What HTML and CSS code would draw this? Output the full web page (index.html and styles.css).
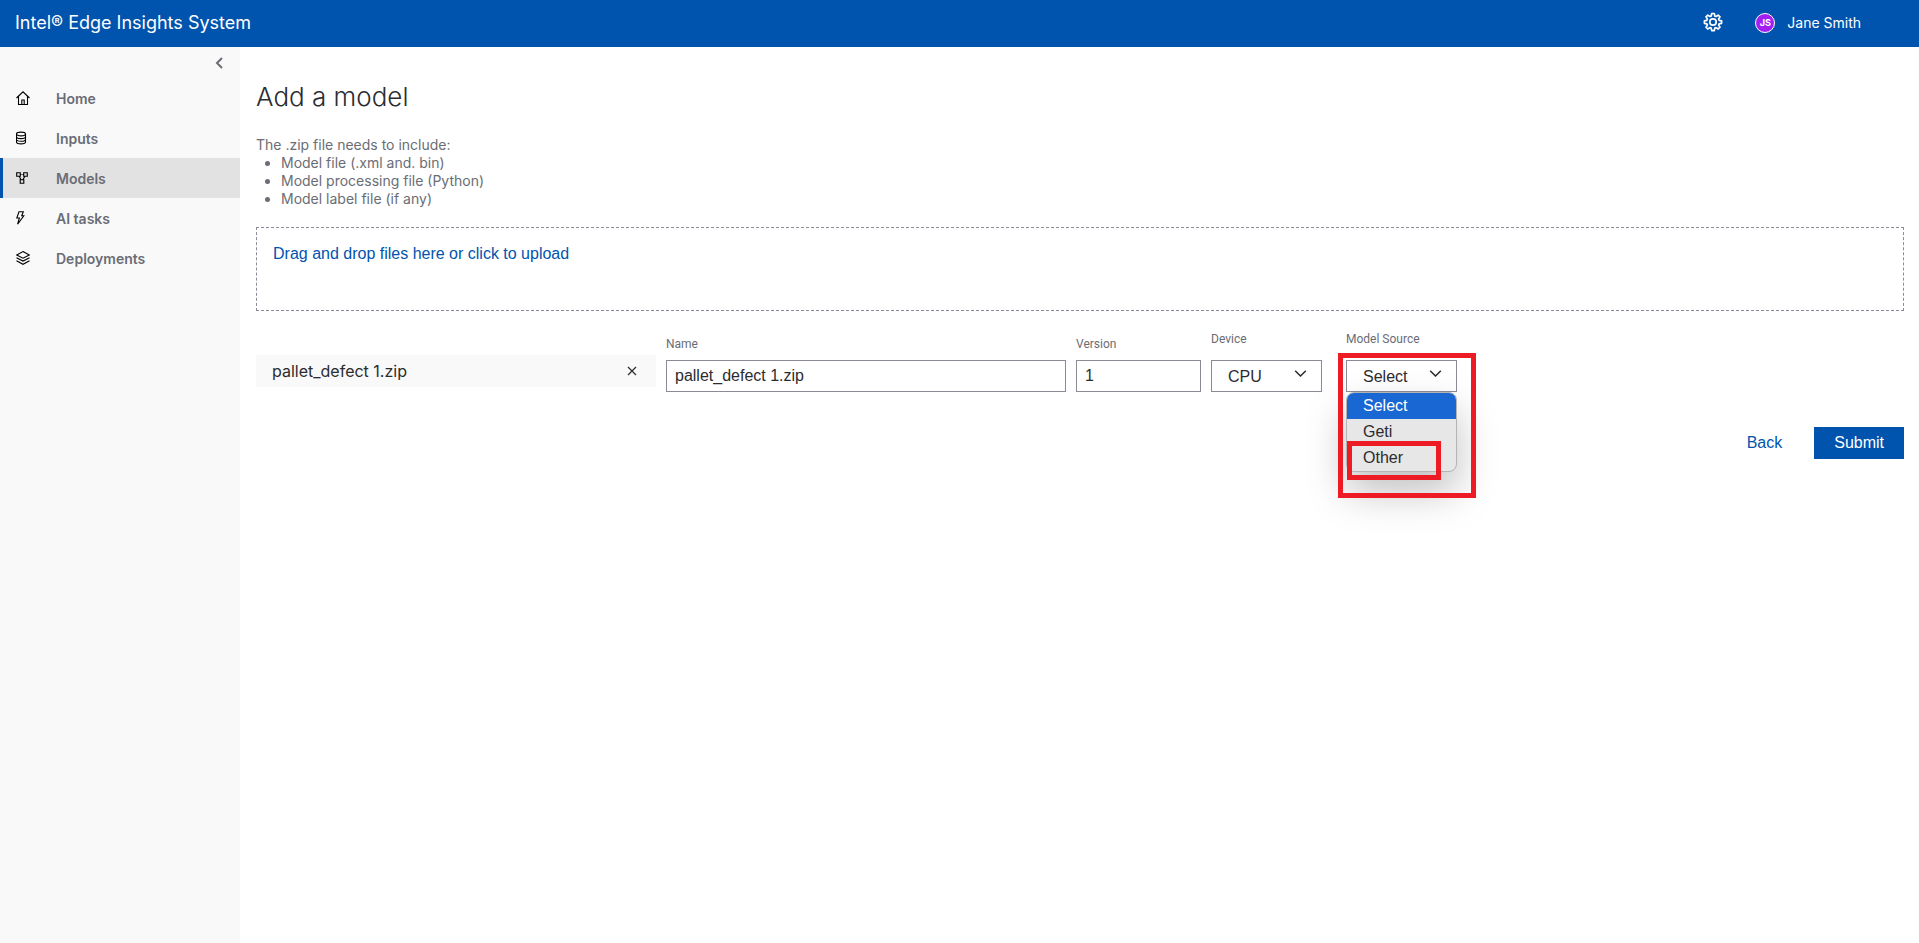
FILE: index.html
```html
<!DOCTYPE html>
<html lang="en">
<head>
<meta charset="UTF-8">
<meta name="viewport" content="width=device-width, initial-scale=1.0">
<title>Add a model</title>
<link rel="stylesheet" href="styles.css">
</head>
<body>

<header class="top-bar">
  <div class="brand">Intel® Edge Insights System</div>
  <div class="user-area">
    <button class="icon-btn settings-btn" type="button" aria-label="Settings">
      <svg width="20" height="20" viewBox="0 0 20 20" fill="none" stroke="currentColor" stroke-width="1.7" stroke-linejoin="round">
        <path d="M8.700 1.500h2.600l.5 2.500 1.300.5 2.100-1.400 1.800 1.800-1.400 2.100.5 1.300 2.500.5v2.500l-2.500.5-.5 1.300 1.400 2.100-1.800 1.800-2.100-1.400-1.300.5-.5 2.500H8.700l-.5-2.500-1.300-.5-2.100 1.400L3 15.200l1.400-2.100-.5-1.300-2.500-.5V8.800l2.500-.5.5-1.300L3 4.900l1.800-1.800 2.100 1.400 1.300-.5z"/>
        <circle cx="10" cy="10" r="3.200"/>
      </svg>
    </button>
    <div class="user">
      <span class="avatar">JS</span>
      <span class="user-name">Jane Smith</span>
    </div>
  </div>
</header>

<div class="layout">
  <aside class="sidebar">
    <button class="icon-btn collapse-btn" type="button" aria-label="Collapse menu">
      <svg width="8" height="12" viewBox="0 0 8 12" fill="none" stroke="currentColor" stroke-width="2"><path d="M7 1L2 6l5 5"/></svg>
    </button>
    <nav class="nav">
      <a class="nav-item" href="#">
        <svg class="nav-icon" viewBox="0 0 14 14"><path d="M.5 7L7 .8 13.500 7M2.500 5.500v8h9v-8"/><path d="M5.800 13.500V9h2.400v4.500"/></svg>
        <span>Home</span>
      </a>
      <a class="nav-item" href="#">
        <svg class="nav-icon" viewBox="0 0 14 14"><ellipse cx="5" cy="3" rx="4.500" ry="1.900"/><path d="M.5 3v8c0 1 2 1.900 4.500 1.900S9.500 12 9.500 11V3M.5 5.700c0 1 2 1.900 4.500 1.900s4.500-.9 4.500-1.900M.5 8.400c0 1 2 1.900 4.500 1.900s4.500-.9 4.500-1.900"/></svg>
        <span>Inputs</span>
      </a>
      <a class="nav-item active" href="#" aria-current="page">
        <svg class="nav-icon" viewBox="0 0 14 14"><path d="M.7 1.700h3.600v3.600H.7zM7.700 1.700h3.600v3.600H7.700zM4.200 8.700h3.600v3.600H4.200zM3.200 5.300L5 8.700M8.800 5.300L7 8.700M4.300 3.500h1.200M6.500 3.500h1.200"/></svg>
        <span>Models</span>
      </a>
      <a class="nav-item" href="#">
        <svg class="nav-icon" viewBox="0 0 14 14"><path d="M3 .7h4.300L5.700 4.700h2.100L1.600 13.200 3.400 7H.8z"/></svg>
        <span>AI tasks</span>
      </a>
      <a class="nav-item" href="#">
        <svg class="nav-icon" viewBox="0 0 14 14"><path d="M7 .6l6.300 3.300L7 7.200.7 3.900zM.5 6.700L7 10.100l6.500-3.400M.5 9.700L7 13.300l6.500-3.600"/></svg>
        <span>Deployments</span>
      </a>
    </nav>
  </aside>

  <main class="content">
    <h1 class="title">Add a model</h1>
    <div class="hint">
      The .zip file needs to include:
      <ul class="hint-list">
        <li>Model file (.xml and. bin)</li>
        <li>Model processing file (Python)</li>
        <li>Model label file (if any)</li>
      </ul>
    </div>

    <form class="model-form">
      <label class="dropzone" for="files">Drag and drop files here or click to upload</label>
      <input class="file-input" type="file" id="files" name="files">

      <div class="file-row">
        <div class="file-chip">
          <span>pallet_defect 1.zip</span>
          <button class="icon-btn" type="button" aria-label="Remove file">
            <svg width="10" height="10" viewBox="0 0 10 10" fill="none" stroke="currentColor" stroke-width="1.2"><path d="M1 1l8 8M9 1L1 9"/></svg>
          </button>
        </div>
        <div class="field">
          <label for="name">Name</label>
          <input class="text-input" type="text" id="name" name="name" value="pallet_defect 1.zip">
        </div>
        <div class="field">
          <label for="version">Version</label>
          <input class="text-input" type="text" id="version" name="version" value="1">
        </div>
        <div class="field select-field">
          <label for="device">Device</label>
          <div class="select-box">
            <select id="device" name="device"><option>CPU</option></select>
            <svg class="select-arrow" viewBox="0 0 12 7"><path d="M.7.7L6 6 11.300.7"/></svg>
          </div>
        </div>
        <div class="field select-field">
          <label for="source">Model Source</label>
          <div class="select-box">
            <select id="source" name="source">
              <option>Select</option>
              <option>Geti</option>
              <option>Other</option>
            </select>
            <svg class="select-arrow" viewBox="0 0 12 7"><path d="M.7.7L6 6 11.300.7"/></svg>
            <ul class="menu" role="listbox" aria-label="Model Source">
              <li class="selected" role="option" aria-selected="true">Select</li>
              <li role="option">Geti</li>
              <li role="option">Other</li>
            </ul>
            <div class="mark mark-source"></div>
            <div class="mark mark-other"></div>
          </div>
        </div>
      </div>

      <div class="actions">
        <button class="btn btn-link" type="button">Back</button>
        <button class="btn btn-primary" type="submit">Submit</button>
      </div>
    </form>
  </main>
</div>

</body>
</html>
```

FILE: styles.css
```css
* {
  box-sizing: border-box;
}
body {
  display: flex;
  flex-direction: column;
  min-height: 100vh;
  margin: 0;
  background: #fff;
  color: #2b2c30;
  font-family: Inter, "Open Sans", sans-serif;
  font-size: 14px;
}
button,
input,
select {
  font: 16px "Liberation Sans", Arial, sans-serif;
  color: inherit;
}
svg {
  display: block;
}

/* header */
.top-bar {
  display: flex;
  align-items: center;
  justify-content: space-between;
  height: 47px;
  padding: 0 58px 2px 15px;
  background: #0054ae;
  color: #fff;
}
.brand {
  font-size: 18px;
}
.user-area,
.user {
  display: flex;
  align-items: center;
}
.user-area {
  gap: 32px;
}
.user {
  gap: 12px;
}
.avatar {
  width: 20px;
  height: 20px;
  border: 1px solid #fff;
  border-radius: 50%;
  background: #a31ff0;
  font-size: 9px;
  font-weight: 700;
  line-height: 18px;
  text-align: center;
}
.icon-btn {
  padding: 0;
  border: 0;
  background: none;
  cursor: pointer;
}
.settings-btn {
  padding-bottom: 2px;
}

/* sidebar */
.layout {
  display: flex;
  flex: 1;
}
.sidebar {
  flex: 0 0 240px;
  background: #f9f9f9;
}
.collapse-btn {
  display: block;
  height: 31px;
  margin-left: auto;
  margin-right: 17px;
  color: #6a6d75;
}
.nav-item {
  display: flex;
  align-items: center;
  gap: 26px;
  height: 40px;
  padding-left: 13px;
  border-left: 3px solid transparent;
  color: #6a6d75;
  font-weight: 600;
  text-decoration: none;
}
.nav-item.active {
  border-left-color: #0054ae;
  background: #e2e2e2;
}
.nav-icon {
  width: 14px;
  height: 14px;
  fill: none;
  stroke: #000;
  stroke-width: 1.1;
}

/* page */
.content {
  flex: 1;
  min-width: 0;
  padding: 30px 15px 32px 16px;
}
.title {
  margin: 0 0 19px;
  font-size: 26px;
  font-weight: 300;
  line-height: 40px;
}
.hint {
  color: #6a6d75;
  line-height: 18px;
}
.hint-list {
  margin: 0;
  padding-left: 25px;
}
.dropzone {
  display: block;
  min-height: 84px;
  margin: 19px 0 20px;
  padding: 16px;
  border: 1px dashed #8b8b97;
  color: #0054ae;
  font: 16px/20px "Liberation Sans", Arial, sans-serif;
  cursor: pointer;
}
.file-input {
  position: absolute;
  width: 1px;
  height: 1px;
  opacity: 0;
}
.file-row {
  display: grid;
  grid-template-columns: minmax(0, 400px) minmax(0, 400px) 125px 125px 125px;
  align-items: end;
  gap: 10px;
}
.file-chip {
  display: flex;
  align-items: center;
  justify-content: space-between;
  height: 32px;
  margin-bottom: 5px;
  padding: 0 19px 0 16px;
  background: #f9f9f9;
  font-size: 16px;
}
.field {
  display: flex;
  flex-direction: column;
  gap: 8px;
  color: #2b2c30;
}
.field label {
  color: #6a6d75;
  font: 12px/16px Roboto, sans-serif;
}
.select-field {
  gap: 13px;
}
.text-input,
.select-box select {
  width: 100%;
  height: 32px;
  padding: 0 8px;
  border: 1px solid #8b8b97;
  border-radius: 0;
  background: #fff;
}
.select-box {
  position: relative;
  width: 111px;
}
.select-box select {
  display: block;
  padding: 0 16px;
  appearance: none;
}
.select-arrow {
  position: absolute;
  top: 10px;
  right: 15px;
  width: 13px;
  height: 7px;
  fill: none;
  stroke: #2b2c30;
  stroke-width: 1.5;
  pointer-events: none;
}
.menu {
  position: absolute;
  top: 32px;
  left: 0;
  width: 100%;
  margin: 0;
  padding: 0;
  overflow: hidden;
  border: 1px solid #b4b4b4;
  border-radius: 8px;
  background: #e7e7e7;
  box-shadow: 0 20px 40px rgba(0, 0, 0, 0.25);
  font: 16px/26px "Liberation Sans", Arial, sans-serif;
  list-style: none;
}
.menu li {
  padding-left: 16px;
}
.menu .selected {
  background: #1967d2;
  color: #fff;
}

/* red callouts around the source menu */
.mark {
  position: absolute;
  border: 5px solid #ed1c24;
  pointer-events: none;
}
.mark-source {
  top: -7px;
  left: -8px;
  width: 138px;
  height: 145px;
}
.mark-other {
  top: 81px;
  left: 1px;
  width: 94px;
  height: 39px;
}

.actions {
  display: flex;
  justify-content: flex-end;
  gap: 12px;
  margin-top: 35px;
}
.btn {
  height: 32px;
  padding: 0 20px;
  border: 0;
  cursor: pointer;
}
.btn-link {
  background: none;
  color: #0054ae;
}
.btn-primary {
  background: #0054ae;
  color: #fff;
}
```
